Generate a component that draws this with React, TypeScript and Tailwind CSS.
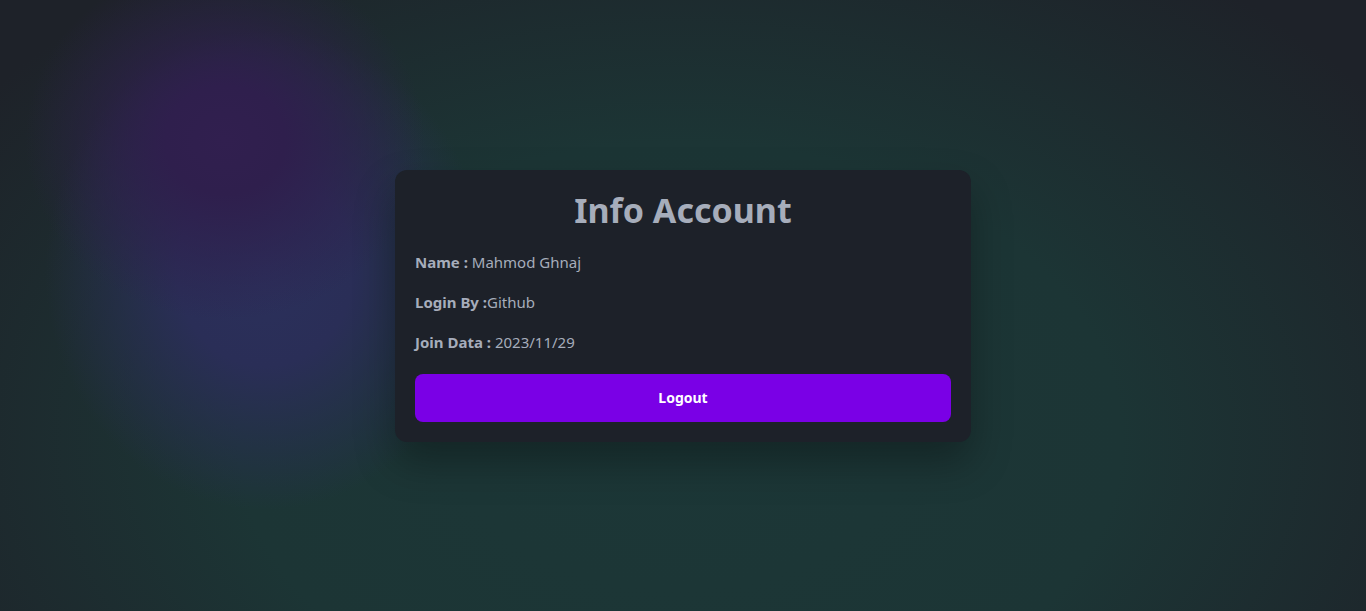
export default function App() {
  return (
    <div className="relative flex h-[611px] w-full items-center justify-center overflow-hidden bg-[#1e2229] font-['Noto_Sans',sans-serif] text-[#a6adbb]">
      {/* background glows */}
      <div className="pointer-events-none absolute inset-0 bg-[radial-gradient(ellipse_980px_660px_at_680px_440px,#1c3737_0%,#1c3535_45%,transparent_88%)]" />
      <div className="pointer-events-none absolute inset-0 bg-[radial-gradient(ellipse_220px_240px_at_265px_270px,#2b305b_0%,#2a2e57_40%,transparent_100%)]" />
      <div className="pointer-events-none absolute inset-0 bg-[radial-gradient(ellipse_200px_180px_at_225px_140px,#311f4f_0%,#2f1f4d_30%,transparent_100%)]" />

      <div className="relative flex w-[576px] flex-col rounded-xl bg-[#1d2129] p-5 shadow-[0_20px_40px_rgba(0,0,0,0.3)]">
        <h1 className="h-10 text-center text-[34px] font-bold leading-10 text-[#a6adbb]">
          Info Account
        </h1>
        <div className="mt-5 flex flex-col gap-4 text-[15px] leading-6">
          <p>
            <span className="font-bold">Name : </span>Mahmod Ghnaj
          </p>
          <p>
            <span className="font-bold">Login By :</span>Github
          </p>
          <p>
            <span className="font-bold">Join Data : </span>2023/11/29
          </p>
        </div>
        <button className="mt-5 h-12 w-full rounded-lg bg-[#7a00e6] text-sm font-bold text-white">
          Logout
        </button>
      </div>
    </div>
  );
}
